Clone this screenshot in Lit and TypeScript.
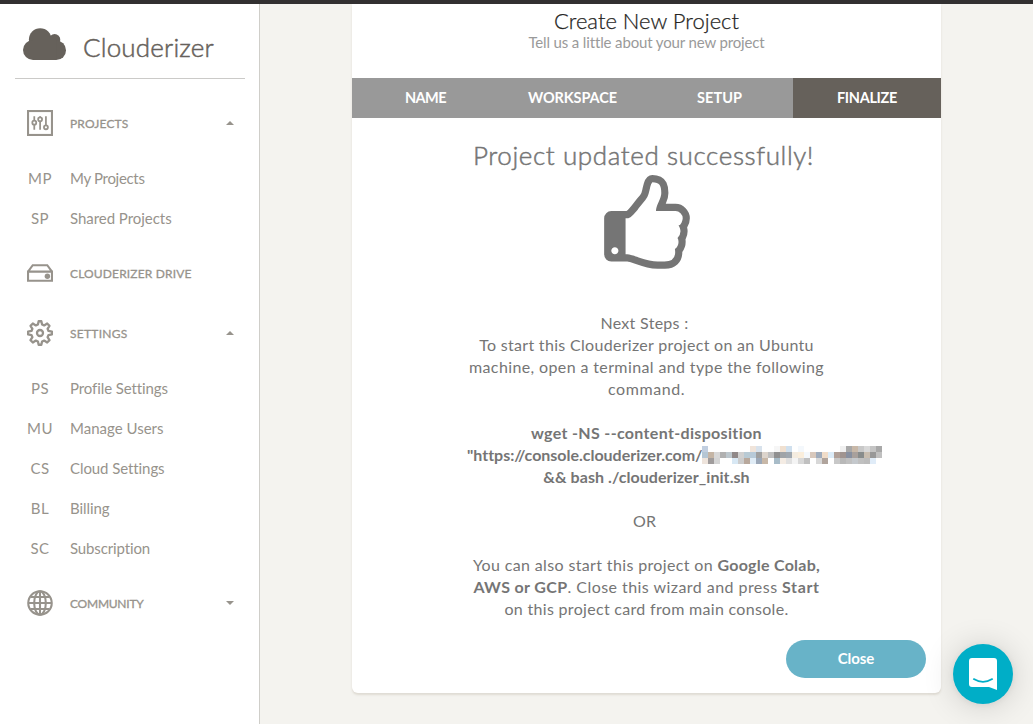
import { LitElement, html, css, svg } from "lit";
import { customElement } from "lit/decorators.js";

/** A run of text with its own tracking in pixels. */
const run = (text: string, tracking: number, cls = "") =>
  html`<span class="run ${cls}" style="letter-spacing:${tracking}px">${text}</span>`;

const icons = {
  sliders: svg`<g fill="none" stroke="currentColor">
    <rect x="1" y="1" width="23" height="23" stroke-width="2"/>
    <g stroke-width="1.7"><path d="M7 6v4M7 14v5M12.600 6v1M12.600 11v8M18.200 6v9"/>
    <circle cx="7" cy="12.200" r="1.900"/><circle cx="12.600" cy="9" r="1.900"/><circle cx="18.200" cy="16.700" r="1.900"/></g></g>`,
  drive: svg`<g fill="none" stroke="currentColor" stroke-width="2">
    <path d="M1 11.200h23v8.800H1zM1 11.200l4.500-6.200h14l4.500 6.200"/></g><circle cx="19.600" cy="15.600" r="2.600" fill="currentColor"/>`,
  gear: svg`<g fill="none" stroke="currentColor" stroke-width="2.200" stroke-linejoin="round">
    <path d="M11.200 1.200h2.600l.7 3.100 2 .9 2.900-1.800 2.200 2.200-1.800 2.900.9 2 3.300.7v2.600l-3.300.7-.9 2 1.800 2.900-2.200 2.200-2.900-1.800-2 .9-.7 3.100h-2.600l-.7-3.100-2-.9-2.900 1.800-2.200-2.200 1.800-2.900-.9-2-3.300-.7v-2.600l3.300-.7.9-2-1.800-2.900 2.200-2.200 2.900 1.800 2-.9z"/>
    <circle cx="12.500" cy="12.500" r="2.900"/></g>`,
  globe: svg`<g fill="none" stroke="currentColor" stroke-width="2">
    <circle cx="12.500" cy="12.500" r="11.300"/><ellipse cx="12.500" cy="12.500" rx="5.600" ry="11.300"/>
    <path d="M12.500 1v23M1 12.500h23M3.400 6.800h18.200M3.400 18.200h18.200"/></g>`,
};

type Child = [string, string, number];
type Section = { icon: keyof typeof icons; label: string; track: number; caret?: "up" | "down"; children?: Child[] };

const sections: Section[] = [
  { icon: "sliders", label: "PROJECTS", track: 0.16, caret: "up",
    children: [["MP", "My Projects", -0.31], ["SP", "Shared Projects", -0.04]] },
  { icon: "drive", label: "CLOUDERIZER DRIVE", track: 0.15 },
  { icon: "gear", label: "SETTINGS", track: 0.26, caret: "up",
    children: [["PS", "Profile Settings", -0.1], ["MU", "Manage Users", 0.01], ["CS", "Cloud Settings", -0.08], ["BL", "Billing", -0.07], ["SC", "Subscription", -0.13]] },
  { icon: "globe", label: "COMMUNITY", track: -0.24, caret: "down" },
];

const tabs: [string, number][] = [["NAME", -0.57], ["WORKSPACE", -0.09], ["SETUP", 0.05], ["FINALIZE", -0.34]];

/** Redacted token: three rows of thirty 6px cells; "-" is an empty cell. */
const mosaic = [
  "c2cfe0 - - - - - - - f0e4da d8e2ec - - f6f6f6 f0e0d0 d0e0ee - f4f8fc - - - - - - f0f0f0 a8a8a8 c8b8a8 c8c8c8 d8d8d8 c4c4c4 a8a8a8",
  "b5c6d4 c5b5a5 d8d8d8 b0b0b0 bcc6cc 908888 d0d0d0 b8cad4 b8cad8 a0a0a0 dcd4cc c0c0c0 909090 a0a4a8 a0a8b0 f4ece0 faeedc f4f8fc d8c8bc a0acbc f0dcc8 dcecf8 b0a098 a09490 8890a0 a8a09c 888c8c c8bdb0 989898 c0c0c0",
  "eee4dc a09c9c d5d5d5 - - d8e8f4 cccccc b8a89c e0ecf6 9ca8b8 c8b8a8 - a8bcc8 f4ece4 e0e0e0 f4f4f4 d8d8d8 c0c0c0 - d8d8d8 b0a49c - c8c8c8 b8b8b8 c0c0c0 c4c8cc c0c0c0 bcbcbc e0ecf8 -",
].map((r) => r.split(" "));

@customElement("side-nav")
class SideNav extends LitElement {
  static styles = css`
    :host { display: block; box-sizing: border-box; width: 260px; background: #fff; border-right: 1px solid #cfcec9; color: #97938c; }
    .run { white-space: pre; }
    .brand { display: flex; align-items: center; height: 74px; margin: 0 14px 0 15px; padding: 0 0 0 8px; border-bottom: 1px solid #cbcac8; color: #66615b; font-size: 26px; font-weight: 300; -webkit-text-stroke: 0.5px currentColor; }
    .brand svg { width: 43px; height: 32px; margin: 6px 17px 0 0; }
    .brand .run { margin-top: 12px; }
    .row { display: grid; grid-template-columns: 55px 1fr auto; align-items: center; padding: 0 25px 0 15px; }
    .head { height: 60px; font-size: 12px; -webkit-text-stroke: 0.3px currentColor; }
    .head svg { width: 26px; height: 26px; margin-left: 12px; }
    .group:first-of-type { margin-top: 14px; }
    .kids { padding: 5px 0; }
    .kid { height: 40px; font-size: 15px; line-height: 18px; }
    .mini { width: 50px; text-align: center; letter-spacing: 0.5px; }
    .caret { width: 0; height: 0; border: 4px solid transparent; }
    .up { border-top: 0; border-bottom-color: currentColor; }
    .down { border-bottom: 0; border-top-color: currentColor; }
  `;
  render() {
    return html`
      <div class="brand">
        <svg viewBox="0 0 43 32" fill="currentColor"><circle cx="17.200" cy="11.500" r="11.300"/><circle cx="31.600" cy="11.700" r="5.700"/><circle cx="10" cy="22" r="10"/><circle cx="33.200" cy="22.200" r="9.800"/><path d="M10 12h23.200v20H10z"/></svg>
        ${run("Clouderizer", 0.17)}
      </div>
      ${sections.map((s) => html`
        <section class="group">
          <div class="row head">
            <svg viewBox="0 0 25 25">${icons[s.icon]}</svg>
            ${run(s.label, s.track)}
            ${s.caret ? html`<i class="caret ${s.caret}"></i>` : ""}
          </div>
          ${s.children ? html`<div class="kids">${s.children.map(([m, l, t]) => html`
            <div class="row kid"><span class="mini">${m}</span>${run(l, t)}</div>`)}</div>` : ""}
        </section>`)}
    `;
  }
}

@customElement("project-wizard")
class ProjectWizard extends LitElement {
  static styles = css`
    :host { display: block; width: 589px; height: 689px; background: #fff; border-radius: 0 0 6px 6px; box-shadow: 0 2px 2px rgba(204, 197, 185, 0.5); color: #757575; text-align: center; }
    .run { white-space: pre; }
    header { height: 74px; box-sizing: border-box; padding-top: 3px; }
    h1 { margin: 0; font-size: 22px; font-weight: 300; line-height: 27px; color: #252422; -webkit-text-stroke: 0.25px currentColor; }
    .sub { line-height: 17px; font-size: 15px; color: #9a9a9a; }
    nav { display: grid; grid-template-columns: repeat(3, 147px) 1fr; height: 40px; line-height: 40px; background: #999; color: #fff; font-size: 14.5px; font-weight: 700; }
    .active { background: #66615b; }
    h2 { margin: 21px 0 0; padding-right: 6px; font-size: 26px; font-weight: 300; line-height: 32px; -webkit-text-stroke: 0.5px currentColor; }
    .thumb { display: block; width: 100px; height: 101px; margin: 4px auto 36px; }
    .copy { width: 359px; margin: 0 auto; font-size: 16px; line-height: 22px; }
    .line { display: flex; justify-content: center; height: 22px; }
    .line.start { justify-content: flex-start; }
    .nudge { padding-right: 4px; }
    .gap { margin-top: 22px; }
    .bold { font-weight: 700; }
    .mosaic { display: grid; grid-template-columns: repeat(30, 6px); grid-auto-rows: 6px; flex: none; margin: 2px 0 0 -1px; }
    footer { display: flex; justify-content: flex-end; padding: 20px 15px 0; }
    button { width: 140px; height: 38px; border: 0; border-radius: 19px; background: #68b3c8; color: #fff; font: 700 15px Lato, sans-serif; padding: 0 0 2px; }
  `;
  render() {
    return html`
      <header>
        <h1>${run("Create New Project", 0)}</h1>
        <div class="sub">${run("Tell us a little about your new project", -0.14)}</div>
      </header>
      <nav>${tabs.map(([t, k], i) => html`<div class=${i === 3 ? "active" : ""}>${run(t, k)}</div>`)}</nav>
      <h2>${run("Project updated successfully!", 0.6)}</h2>
      <svg class="thumb" viewBox="0 0 1792 1792" preserveAspectRatio="none"><path fill="currentColor" d="M384 1344q0-26-19-45t-45-19-45 19-19 45 19 45 45 19 45-19 19-45zm1152-576q0-51-39-89.500t-89-38.500h-352q0-58 48-159.500t48-160.500q0-98-32-145t-128-47q-26 26-38 85t-30.500 125.500-59.500 109.500q-22 23-77 91-4 5-23 30t-31.500 41-34.500 42.500-40 44-38.500 35.500-40 27-35.500 9h-32v640h32q13 0 31.500 3t33 6.500 38 11 35 11.500 35.500 12.500 29 10.500q211 73 342 73h121q192 0 192-167 0-26-5-56 30-16 47.500-52.500t17.500-73.500-18-69q53-50 53-119 0-25-10-55.500t-25-47.500q32-1 53.500-47t21.500-81zm128-1q0 89-49 163 9 33 9 69 0 77-38 144 3 21 3 43 0 101-60 178 1 139-85 219.500t-227 80.500h-129q-96 0-189.500-22.500t-216.500-65.500q-116-40-138-40h-288q-53 0-90.500-37.500t-37.500-90.500v-640q0-53 37.500-90.500t90.500-37.500h274q36-24 137-155 58-75 107-128 24-25 35.500-85.500t30.500-126.500 62-108q39-37 90-37 84 0 151 32.500t102 101.500 35 186q0 93-48 192h176q104 0 180 76t76 179z"/></svg>
      <div class="copy">
        <div class="line nudge">${run("Next Steps :", 0.29)}</div>
        <div class="line">${run("To start this Clouderizer project on an Ubuntu", 0.31)}</div>
        <div class="line">${run("machine, open a terminal and type the following", 0.38)}</div>
        <div class="line">${run("command.", 0.56)}</div>
        <div class="line gap bold">${run("wget -NS --content-disposition", 0.33)}</div>
        <div class="line start bold">${run('"https://console.clouderizer.com/', -0.02)}
          <div class="mosaic">${mosaic.flat().map((c) => html`<i style="background:${c === "-" ? "none" : "#" + c}"></i>`)}</div>
        </div>
        <div class="line bold">${run("&& bash ./clouderizer_init.sh", 0.07)}</div>
        <div class="line gap nudge">${run("OR", 0.08)}</div>
        <div class="line gap">${run("You can also start this project on ", 0.36)}${run("Google Colab,", 0.25, "bold")}</div>
        <div class="line">${run("AWS or GCP", 0.36, "bold")}${run(". Close this wizard and press ", 0.45)}${run("Start", 0.62, "bold")}</div>
        <div class="line">${run("on this project card from main console.", 0.31)}</div>
      </div>
      <footer><button>${run("Close", -0.07)}</button></footer>
    `;
  }
}

@customElement("app-root")
class AppRoot extends LitElement {
  static styles = css`
    :host { display: block; box-sizing: border-box; height: 724px; overflow: hidden; background: #f4f3ef; border-top: 4px solid #323031; font-family: Lato, sans-serif; }
    .page { display: flex; height: 720px; }
    side-nav { flex: none; }
    project-wizard { flex: none; margin-left: 92px; }
    .chat { position: absolute; left: 953px; top: 644px; width: 60px; height: 60px; border-radius: 50%; background: #00aec7; box-shadow: 0 1px 6px rgba(0, 0, 0, 0.06), 0 2px 32px rgba(0, 0, 0, 0.16); }
    .chat svg { display: block; width: 60px; height: 60px; }
  `;
  render() {
    return html`
      <div class="page">
        <side-nav></side-nav>
        <project-wizard></project-wizard>
      </div>
      <div class="chat"><svg viewBox="0 0 60 60">
        <path fill="#fff" d="M19 14h22a3 3 0 0 1 3 3v29l-8-3H19a3 3 0 0 1-3-3V17a3 3 0 0 1 3-3z"/>
        <path d="M20.800 35.100q9.200 5.600 18.400 0" fill="none" stroke="#00aec7" stroke-width="1.800" stroke-linecap="round"/>
      </svg></div>
    `;
  }
}
